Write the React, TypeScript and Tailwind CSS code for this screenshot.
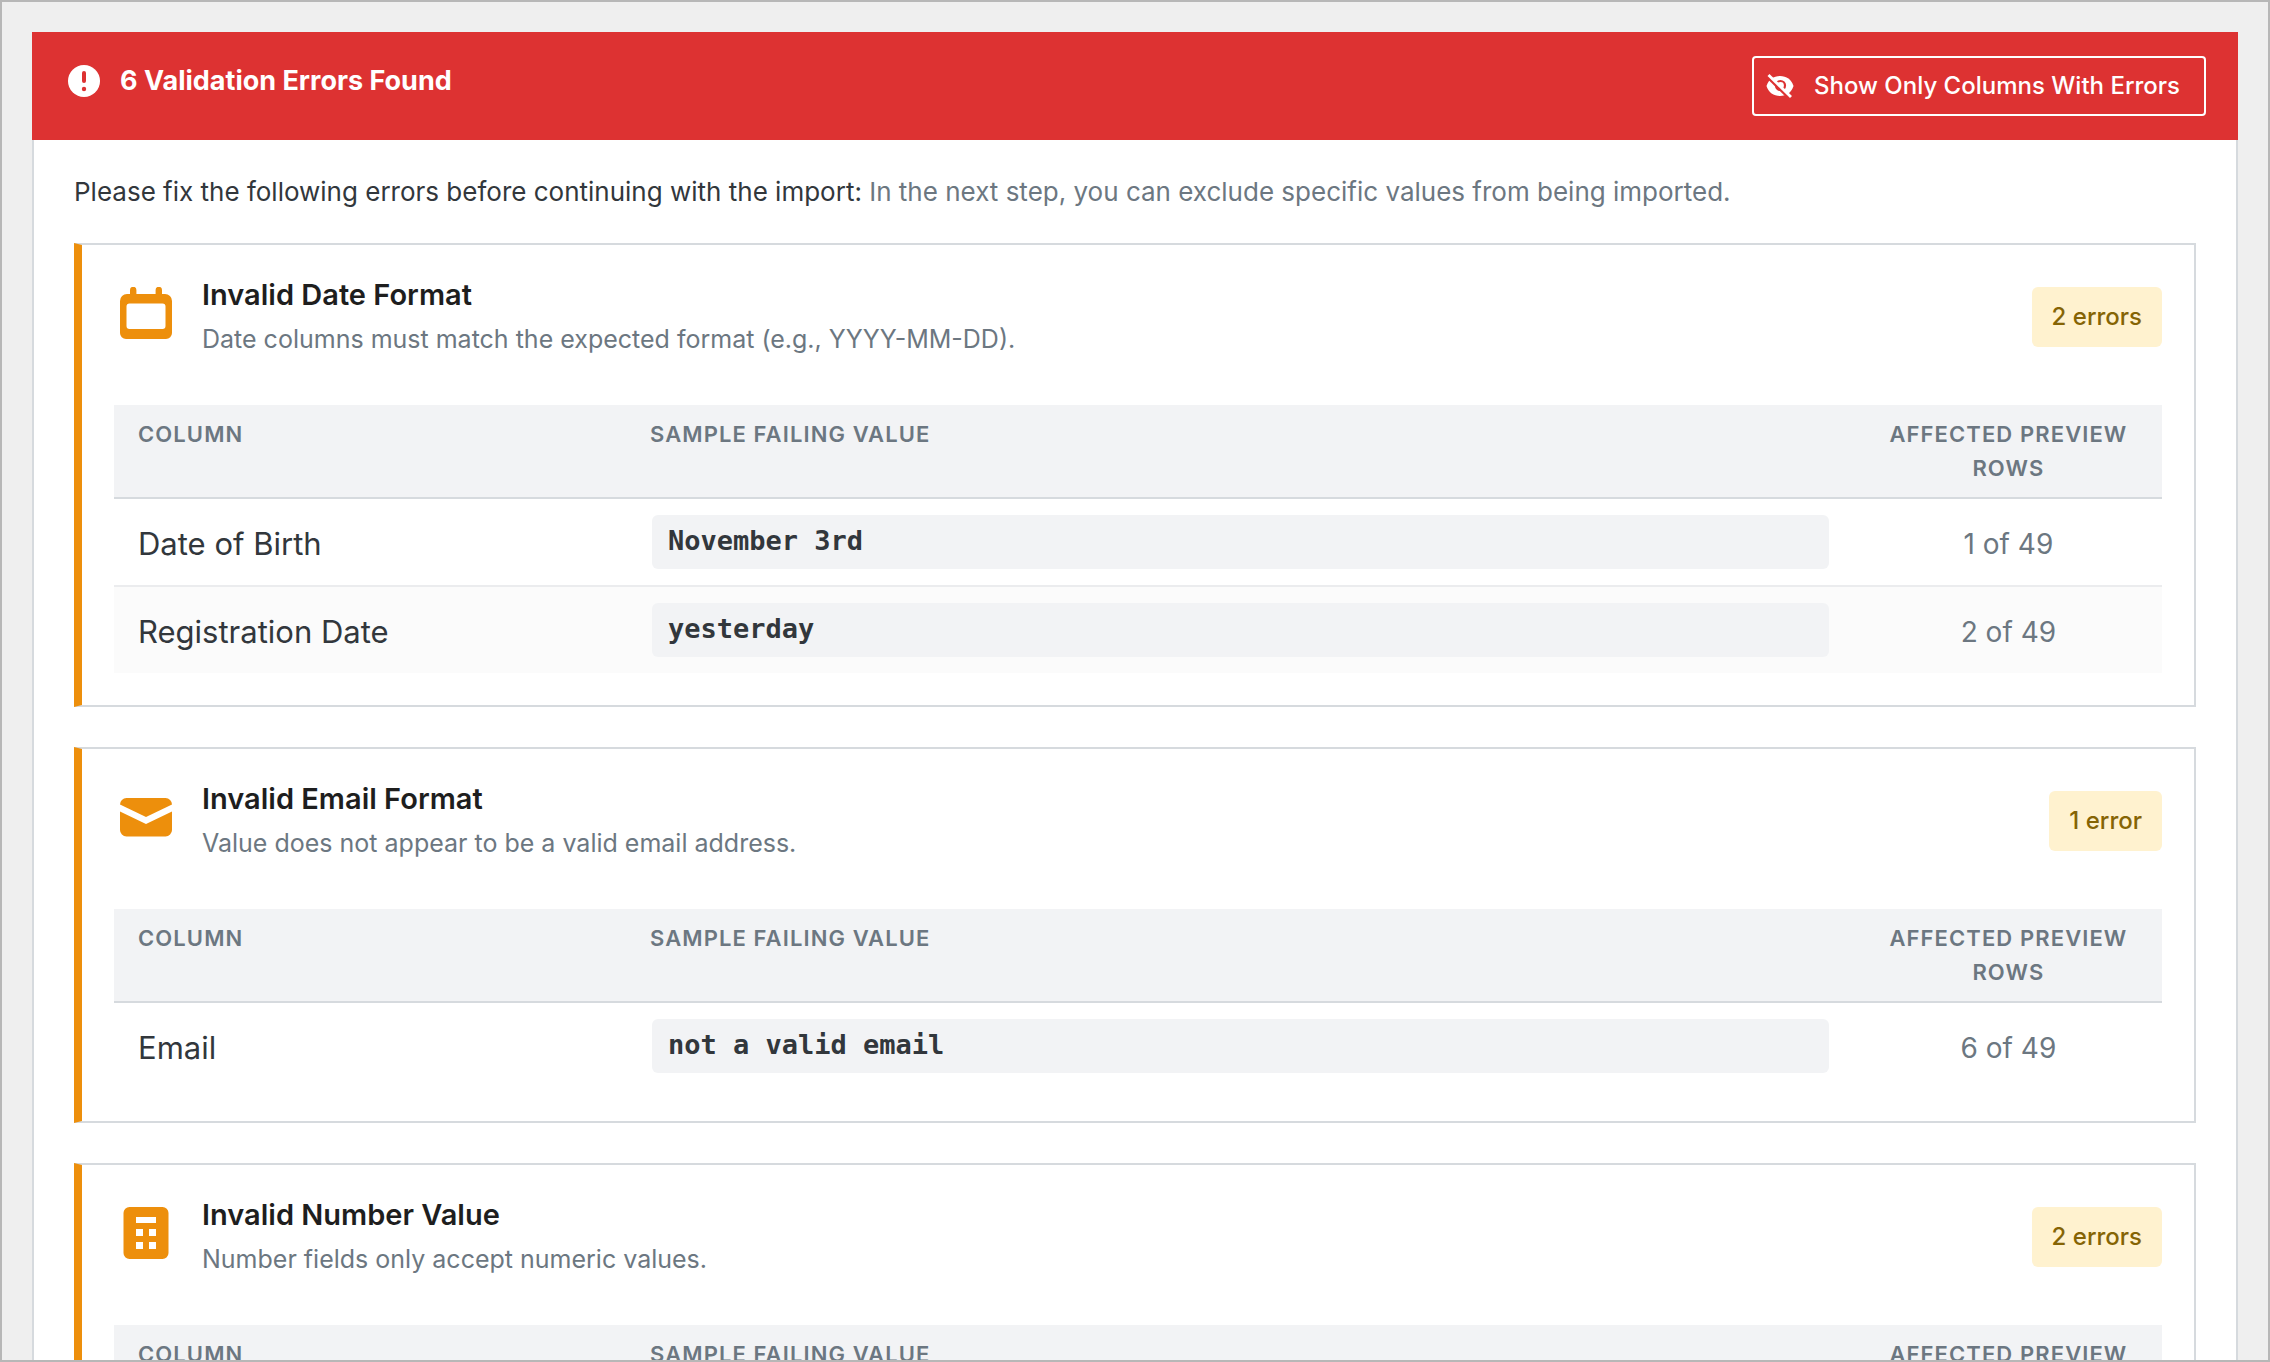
import React from "react";

type Row = { column: string; sample: string; affected: string };
type Group = {
  title: string;
  description: string;
  count: string;
  icon: React.ReactNode;
  rows: Row[];
};

function AlertIcon() {
  return (
    <svg viewBox="0 0 32 32" className="size-8 shrink-0" aria-hidden="true">
      <circle cx="16" cy="16" r="16" fill="#fff" />
      <rect x="14" y="6" width="4" height="12" rx="2" fill="#dd3232" />
      <circle cx="16" cy="24" r="2.2" fill="#dd3232" />
    </svg>
  );
}

function HiddenIcon() {
  return (
    <svg viewBox="0 0 28 24" className="h-6 w-7 shrink-0" aria-hidden="true">
      <path d="M14 2C7.500 2 2.500 5.500.500 12 2.500 18.500 7.500 22 14 22s11.500-3.500 13.500-10C25.500 5.500 20.500 2 14 2z" fill="#fff" />
      <circle cx="14.500" cy="11.500" r="4.500" fill="none" stroke="#dd3232" strokeWidth="2.200" />
      <path d="M0 1.500 24 25" stroke="#dd3232" strokeWidth="2.800" />
      <path d="M2.500 1 25 23" stroke="#fff" strokeWidth="2.800" />
    </svg>
  );
}

function CalendarIcon() {
  return (
    <svg viewBox="0 0 52 52" className="size-[52px]" fill="#ed8f0c" aria-hidden="true">
      <path
        fillRule="evenodd"
        d="M10 3a3.200 3.200 0 0 1 6.400 0v4h19.200V3a3.200 3.200 0 0 1 6.400 0v4h3a7 7 0 0 1 7 7v32a6 6 0 0 1-6 6H6a6 6 0 0 1-6-6V14a7 7 0 0 1 7-7h3zM9.500 16.500a3 3 0 0 0-3 3V39a3 3 0 0 0 3 3h33a3 3 0 0 0 3-3V19.500a3 3 0 0 0-3-3z"
      />
    </svg>
  );
}

function MailIcon() {
  return (
    <svg viewBox="0 0 52 52" className="size-[52px]" fill="#ed8f0c" aria-hidden="true">
      <path d="M0 13.500A6.500 6.500 0 0 1 6.500 7h39a6.500 6.500 0 0 1 6.500 6.500L26 26z" />
      <path d="M0 20.500 26 33l26-12.500V39a6.500 6.500 0 0 1-6.500 6.500h-39A6.500 6.500 0 0 1 0 39z" />
    </svg>
  );
}

function CalculatorIcon() {
  return (
    <svg viewBox="0 0 52 52" className="size-[52px]" fill="#ed8f0c" aria-hidden="true">
      <path
        fillRule="evenodd"
        d="M9.500 0h33a6 6 0 0 1 6 6v40a6 6 0 0 1-6 6h-33a6 6 0 0 1-6-6V6a6 6 0 0 1 6-6zM16 10v6h20v-6zM16 22v7h7v-7zM29 22v7h7v-7zM16 35v7h7v-7zM29 35v7h7v-7z"
      />
    </svg>
  );
}

const groups: Group[] = [
  {
    title: "Invalid Date Format",
    description: "Date columns must match the expected format (e.g., YYYY-MM-DD).",
    count: "2 errors",
    icon: <CalendarIcon />,
    rows: [
      { column: "Date of Birth", sample: "November 3rd", affected: "1 of 49" },
      { column: "Registration Date", sample: "yesterday", affected: "2 of 49" },
    ],
  },
  {
    title: "Invalid Email Format",
    description: "Value does not appear to be a valid email address.",
    count: "1 error",
    icon: <MailIcon />,
    rows: [{ column: "Email", sample: "not a valid email", affected: "6 of 49" }],
  },
  {
    title: "Invalid Number Value",
    description: "Number fields only accept numeric values.",
    count: "2 errors",
    icon: <CalculatorIcon />,
    rows: [],
  },
];

function ErrorCard({ group }: { group: Group }) {
  return (
    <section className="border-2 border-l-8 border-[#d6dade] border-l-[#ed8f0c] px-8 pb-8">
      <div className="flex h-40 items-start pt-[30px]">
        <div className="mt-3 mr-[30px] ml-1.5 shrink-0">{group.icon}</div>
        <div className="flex-1">
          <h2 className="text-[29px] leading-10 font-semibold text-[#1e1e1e]">{group.title}</h2>
          <p className="mt-1 text-[25px] leading-10 text-[#6c7781]">{group.description}</p>
        </div>
        <span className="mt-3 rounded-md bg-[#fff2cf] px-5 text-[24px] leading-[60px] font-medium text-[#856404]">
          {group.count}
        </span>
      </div>
      <table className="w-full table-fixed border-separate border-spacing-0">
        <thead>
          <tr className="bg-[#f2f3f5] align-top text-[22px] leading-[34px] tracking-wider text-[#6c7781] uppercase">
            <th scope="col" className="w-1/4 border-b-2 border-[#d6dade] px-6 py-3 text-left font-semibold">
              Column
            </th>
            <th scope="col" className="w-3/5 border-b-2 border-[#d6dade] px-6 py-3 text-left font-semibold">
              Sample Failing Value
            </th>
            <th scope="col" className="border-b-2 border-[#d6dade] px-6 py-3 text-center font-semibold">
              Affected Preview Rows
            </th>
          </tr>
        </thead>
        <tbody>
          {group.rows.map((row) => (
            <tr
              key={row.column}
              className="even:bg-[#fbfbfb] [&:not(:last-child)>td]:border-b-2 [&:not(:last-child)>td]:border-[#ebecee]"
            >
              <td className="px-6 pt-1 text-[31px] leading-10 text-[#32373c]">{row.column}</td>
              <td className="px-6 py-4">
                <code className="mx-0.5 block rounded-md bg-[#f2f3f5] px-4 pb-0.5 font-['DejaVu_Sans_Mono',monospace] text-[27px] leading-[52px] font-bold text-[#32373c]">
                  {row.sample}
                </code>
              </td>
              <td className="px-6 pt-1 text-center text-[28px] leading-10 text-[#6c7781]">{row.affected}</td>
            </tr>
          ))}
        </tbody>
      </table>
    </section>
  );
}

export default function App() {
  return (
    <div className="h-screen overflow-hidden border-2 border-[#b7b7b7] bg-[#efefef] px-[30px] pt-[30px] font-[Inter,sans-serif]">
      <header className="flex items-start justify-between bg-[#dd3232] px-8 py-6 text-white">
        <div className="ml-1 flex items-center gap-5 pt-[5px]">
          <AlertIcon />
          <h1 className="text-[27px] leading-10 font-bold">6 Validation Errors Found</h1>
        </div>
        <button
          type="button"
          className="flex h-[60px] items-center gap-5 rounded border-2 border-white pr-6 pl-3 text-[24px] font-medium"
        >
          <HiddenIcon />
          Show Only Columns With Errors
        </button>
      </header>
      <main className="border-x-2 border-[#d6dade] bg-white px-10">
        <p className="pt-8 pb-[31px] text-[26px] leading-10 text-[#32373c]">
          Please fix the following errors before continuing with the import:{" "}
          <span className="text-[#6c7781]">In the next step, you can exclude specific values from being imported.</span>
        </p>
        <div className="flex flex-col gap-10">
          {groups.map((group) => (
            <ErrorCard key={group.title} group={group} />
          ))}
        </div>
      </main>
    </div>
  );
}
